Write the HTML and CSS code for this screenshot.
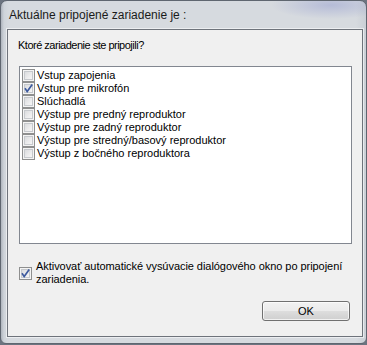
FILE: index.html
```html
<!DOCTYPE html>
<html lang="sk">
<head>
<meta charset="utf-8">
<title>Aktuálne pripojené zariadenie je :</title>
<link rel="stylesheet" href="styles.css">
</head>
<body>
<div class="window">
  <div class="titlebar">Aktuálne pripojené zariadenie je :</div>
  <div class="client">
    <div class="question">Ktoré zariadenie ste pripojili?</div>
    <div class="list">
      <div class="row"><span class="cb"></span><span class="lbl">Vstup zapojenia</span></div>
      <div class="row"><span class="cb checked"><svg viewBox="0 0 13 13" width="13" height="13"><path d="M3 6.2 L5.2 9.6 L10.2 2.6" fill="none" stroke="#3d5a9e" stroke-width="1.7"/></svg></span><span class="lbl">Vstup pre mikrofón</span></div>
      <div class="row"><span class="cb"></span><span class="lbl">Slúchadlá</span></div>
      <div class="row"><span class="cb"></span><span class="lbl">Výstup pre predný reproduktor</span></div>
      <div class="row"><span class="cb"></span><span class="lbl">Výstup pre zadný reproduktor</span></div>
      <div class="row"><span class="cb"></span><span class="lbl">Výstup pre stredný/basový reproduktor</span></div>
      <div class="row"><span class="cb"></span><span class="lbl">Výstup z bočného reproduktora</span></div>
    </div>
    <div class="option">
      <span class="cb checked"><svg viewBox="0 0 13 13" width="13" height="13"><path d="M3 6.2 L5.2 9.6 L10.2 2.6" fill="none" stroke="#3d5a9e" stroke-width="1.7"/></svg></span>
      <span class="optlbl">Aktivovať automatické vysúvacie dialógového okno po pripojení zariadenia.</span>
    </div>
    <div class="buttons">
      <div class="btn">OK</div>
    </div>
  </div>
</div>
</body>
</html>
```

FILE: styles.css
```css
html, body {
  margin: 0;
  padding: 0;
  background: #6c7480;
}
body {
  width: 367px;
  height: 345px;
  overflow: hidden;
  font-family: "Liberation Sans", Arial, sans-serif;
}
.window {
  box-sizing: border-box;
  width: 367px;
  height: 344px;
  border: 1px solid #5f6670;
  border-radius: 7px 7px 6px 6px;
  background:
    radial-gradient(ellipse 60px 14px at 330px 4px, rgba(120,130,200,0.35), rgba(200,205,220,0) 100%),
    linear-gradient(to right, #aeb4bd 0, #cfd4da 3px, #d6dadf 8px, #d6dadf 355px, #c9ced5 366px);
  display: flex;
  flex-direction: column;
  padding: 0 3px 0 6px;
}
.titlebar {
  height: 28px;
  font-size: 12px;
  line-height: 28px;
  color: #1a1a1a;
  padding-left: 2px;
}
.client {
  box-sizing: border-box;
  width: 356px;
  height: 308px;
  border: 1px solid #6e737b;
  box-shadow: 0 0 0 1px rgba(255,255,255,0.55);
  background: #f0f0f0;
  display: flex;
  flex-direction: column;
  font-size: 11px;
  color: #000;
}
.question {
  margin: 9px 0 0 10px;
  height: 13px;
  line-height: 13px;
  letter-spacing: -0.5px;
}
.list {
  box-sizing: border-box;
  margin: 14px 0 0 11px;
  width: 333px;
  height: 178px;
  border: 1px solid #828790;
  background: #fff;
  padding: 2px 0 0 2px;
  display: flex;
  flex-direction: column;
}
.row {
  height: 13px;
  display: flex;
  align-items: center;
  line-height: 13px;
  white-space: nowrap;
}
.cb {
  box-sizing: border-box;
  flex: none;
  width: 13px;
  height: 13px;
  border: 1px solid #8e8f8f;
  background: linear-gradient(135deg, #d2d4d7 0%, #eeeeef 60%, #fbfbfb 100%);
  box-shadow: inset 0 0 0 1px #f4f4f4, inset 0 0 0 2px #c6c9cd;
  position: relative;
}
.cb svg {
  position: absolute;
  left: -1px;
  top: -1px;
}
.lbl {
  margin-left: 2px;
}
.option {
  margin: 16px 0 0 11px;
  display: flex;
  align-items: center;
  height: 26px;
}
.optlbl {
  margin-left: 4px;
  line-height: 13px;
  width: 310px;
  letter-spacing: -0.05px;
}
.buttons {
  display: flex;
  justify-content: flex-end;
  margin: 15px 12px 0 0;
}
.btn {
  box-sizing: border-box;
  width: 88px;
  height: 20px;
  border: 1px solid #707070;
  border-radius: 3px;
  background: linear-gradient(to bottom, #f2f2f2 0%, #ebebeb 48%, #dddddd 52%, #cfcfcf 100%);
  box-shadow: inset 0 0 0 1px rgba(255,255,255,0.7);
  text-align: center;
  line-height: 18px;
  font-size: 11px;
}
```
